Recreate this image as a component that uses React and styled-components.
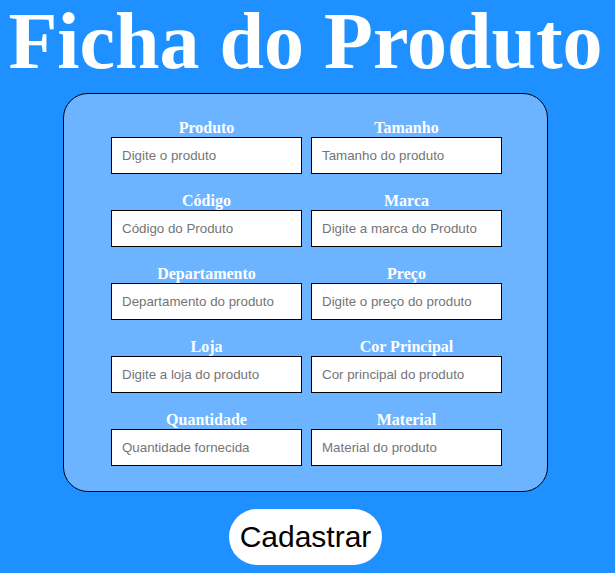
import React from "react";
import styled, { createGlobalStyle } from "styled-components";

const GlobalStyle = createGlobalStyle`
  body {
    margin: 0;
    min-height: 100vh;
    background: #1e90ff;
    font-family: "Liberation Serif", "Times New Roman", serif;
  }
  *, *::before, *::after { box-sizing: border-box; }
`;

const Page = styled.main`
  display: flex;
  flex-direction: column;
  align-items: center;
  gap: 11px;
  padding-right: 4px;
`;

const Title = styled.h1`
  margin: 0;
  color: #fff;
  font-size: 80px;
  line-height: 82px;
  font-weight: bold;
  text-align: center;
`;

const Form = styled.form`
  display: flex;
  flex-direction: column;
  align-items: center;
  gap: 17px;
`;

const Panel = styled.div`
  display: grid;
  grid-template-columns: repeat(2, auto);
  gap: 18px 9px;
  padding: 25px 45px 25px 47px;
  border: 1px solid #000;
  border-radius: 25px;
  background: #6cb4ff;
`;

const Field = styled.div`
  display: flex;
  flex-direction: column;
  align-items: center;
`;

const Label = styled.label`
  color: #fff;
  font-size: 16px;
  line-height: 18px;
  font-weight: bold;
`;

const Input = styled.input`
  width: 191px;
  height: 37px;
  padding: 10px;
  border: 1px solid #000;
  border-radius: 0;
  background: #fff;
  color: #000;
  font-family: "Liberation Sans", Arial, sans-serif;
  &::placeholder { color: #757575; }
`;

const SubmitButton = styled.button`
  padding: 10px 11px;
  border: 0;
  border-radius: 30px;
  background: #fff;
  color: #000;
  font-family: "Liberation Sans", Arial, sans-serif;
  font-size: 30px;
  line-height: 36px;
  cursor: pointer;
`;

const fields = [
  ["produto", "Produto", "Digite o produto"],
  ["tamanho", "Tamanho", "Tamanho do produto"],
  ["codigo", "Código", "Código do Produto"],
  ["marca", "Marca", "Digite a marca do Produto"],
  ["departamento", "Departamento", "Departamento do produto"],
  ["preco", "Preço", "Digite o preço do produto"],
  ["loja", "Loja", "Digite a loja do produto"],
  ["cor", "Cor Principal", "Cor principal do produto"],
  ["quantidade", "Quantidade", "Quantidade fornecida"],
  ["material", "Material", "Material do produto"],
];

export default function App() {
  return (
    <Page>
      <GlobalStyle />
      <Title>Ficha do Produto</Title>
      <Form onSubmit={(event) => event.preventDefault()}>
        <Panel>
          {fields.map(([id, label, placeholder]) => (
            <Field key={id}>
              <Label htmlFor={id}>{label}</Label>
              <Input id={id} name={id} type="text" placeholder={placeholder} />
            </Field>
          ))}
        </Panel>
        <SubmitButton type="submit">Cadastrar</SubmitButton>
      </Form>
    </Page>
  );
}
